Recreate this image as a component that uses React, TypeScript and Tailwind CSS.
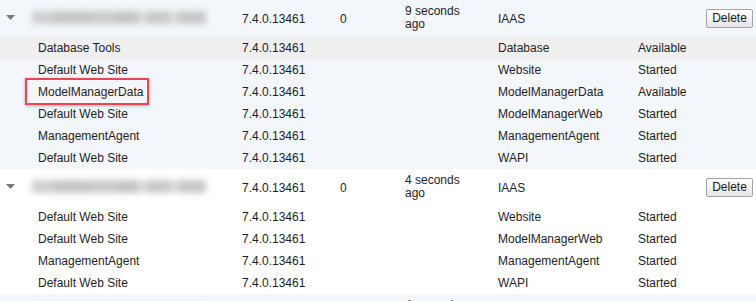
import React from "react";

type Sub = { name: string; type: string; status: string; hover?: boolean };
type Group = { time: string; bg: string; subs: Sub[] };

const VERSION = "7.4.0.13461";

const groups: Group[] = [
  {
    time: "9 seconds ago",
    bg: "bg-[#f3f6fb]",
    subs: [
      { name: "Database Tools", type: "Database", status: "Available", hover: true },
      { name: "Default Web Site", type: "Website", status: "Started" },
      { name: "ModelManagerData", type: "ModelManagerData", status: "Available" },
      { name: "Default Web Site", type: "ModelManagerWeb", status: "Started" },
      { name: "ManagementAgent", type: "ManagementAgent", status: "Started" },
      { name: "Default Web Site", type: "WAPI", status: "Started" },
    ],
  },
  {
    time: "4 seconds ago",
    bg: "bg-white",
    subs: [
      { name: "Default Web Site", type: "Website", status: "Started" },
      { name: "Default Web Site", type: "ModelManagerWeb", status: "Started" },
      { name: "ManagementAgent", type: "ManagementAgent", status: "Started" },
      { name: "Default Web Site", type: "WAPI", status: "Started" },
    ],
  },
  {
    time: "4 seconds ago",
    bg: "bg-[#f3f6fb]",
    subs: [],
  },
];

function Caret() {
  return (
    <svg width="9" height="5" viewBox="0 0 9 5" className="block">
      <path d="M0 0 H9 L4.5 5 Z" fill="#7a7a7a" />
    </svg>
  );
}

// Host name is masked with a soft grey smudge
function MaskedHost() {
  const segs = [
    ["w-[22px]", "bg-[#cfcfcf]"],
    ["w-[36px]", "bg-[#c6c6c6]"],
    ["w-[28px]", "bg-[#cbcbcb]"],
    ["w-[20px]", "bg-[#c4c4c4]"],
    ["w-[8px]", "bg-[#dedede]"],
    ["w-[24px]", "bg-[#c9c9c9]"],
    ["w-[8px]", "bg-[#dddddd]"],
    ["w-[28px]", "bg-[#c7c7c7]"],
  ];
  return (
    <div className="flex h-[13px] w-[174px] ml-[2px] blur-[3px]">
      {segs.map(([w, c], i) => (
        <div key={i} className={`${w} ${c} h-full`} />
      ))}
    </div>
  );
}

function DeleteButton() {
  return (
    <button className="h-[19px] w-[47px] border border-[#a3a3a3] rounded-[2px] bg-gradient-to-b from-[#fdfdfd] to-[#e6e6e6] text-[12px] leading-[17px] text-[#1a1a1a] font-['Liberation_Sans',Arial,sans-serif]">
      Delete
    </button>
  );
}

function HeaderRow({ time }: { time: string }) {
  return (
    <div className="flex h-[37px] items-center">
      <div className="w-[30px] flex justify-start pl-[6px] -mt-[3px]">
        <Caret />
      </div>
      <div className="w-[212px] -mt-[2px]">
        <MaskedHost />
      </div>
      <div className="w-[98px]">{VERSION}</div>
      <div className="w-[65px]">0</div>
      <div className="w-[93px] -mt-[1px]">
        <div className="w-[60px] leading-[13px]">{time}</div>
      </div>
      <div className="w-[140px]">IAAS</div>
      <div className="w-[68px]" />
      <div className="w-[50px] -mt-[1px]">
        <DeleteButton />
      </div>
    </div>
  );
}

function SubRow({ sub }: { sub: Sub }) {
  return (
    <div className={`flex h-[22px] items-center ${sub.hover ? "bg-[#efefef]" : ""}`}>
      <div className="w-[30px]" />
      <div className="w-[212px] pl-[8px]">{sub.name}</div>
      <div className="w-[98px]">{VERSION}</div>
      <div className="w-[65px]" />
      <div className="w-[93px]" />
      <div className="w-[140px]">{sub.type}</div>
      <div className="w-[68px]">{sub.status}</div>
      <div className="w-[50px]" />
    </div>
  );
}

export default function App() {
  return (
    <div className="relative w-[756px] h-[301px] overflow-hidden bg-white text-[12px] text-[#1e1e1e] font-['Liberation_Sans',Arial,sans-serif]">
      {groups.map((g, gi) => (
        <div key={gi} className={g.bg}>
          <HeaderRow time={g.time} />
          {g.subs.map((s, si) => (
            <SubRow key={si} sub={s} />
          ))}
        </div>
      ))}
      {/* highlight frame around the ModelManagerData component */}
      <div className="pointer-events-none absolute left-[25px] top-[78px] h-[27px] w-[124px] border-2 border-[#e9474e] shadow-[0_1px_3px_rgba(0,0,0,0.3)]" />
    </div>
  );
}
